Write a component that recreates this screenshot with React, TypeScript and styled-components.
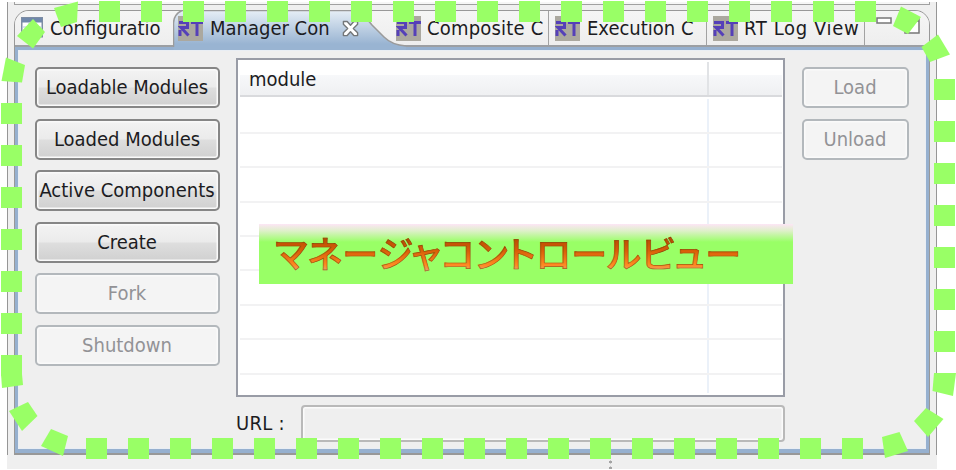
import React from "react";
import styled, { createGlobalStyle, css } from "styled-components";

const Global = createGlobalStyle`
  * { box-sizing: border-box; }
  body { margin: 0; background: #fff; }
`;

const ui = css`
  font-family: "DejaVu Sans Condensed", "DejaVu Sans", sans-serif;
  font-stretch: condensed;
  font-size: 20px;
  line-height: 24px;
  color: #1c1c22;
  white-space: nowrap;
`;

const Page = styled.div`
  ${ui}
  position: relative;
  width: 956px;
  height: 470px;
  overflow: hidden;
  background: #fff;
  padding: 2px 0 0 7px;
`;

const Shell = styled.div`
  width: 930px;
  height: 467px;
  background: #efefef;
`;

const Sides = styled.div`
  height: 453px;
  padding: 0 6px;
  border-left: 1px solid #969696;
  border-right: 1px solid #969696;
`;

const PaneAbove = styled.div`
  height: 3px;
  background: #f6f6f6;
  border: 1px solid #a0a0a0;
  border-top: 0;
`;

const View = styled.div`
  margin-top: 5px;
  height: 445px;
  border: 1px solid #989898;
  border-bottom-width: 2px;
  border-radius: 15px 15px 0 0;
  overflow: hidden;
`;

const TabBar = styled.div`
  display: flex;
  height: 36px;
  background: linear-gradient(#f5f5f5, #eeeeee);
  border-bottom: 2px solid #9c9fa3;
`;

const Tab = styled.div<{ $w: number; $pad: number; $edge?: boolean }>`
  position: relative;
  display: flex;
  align-items: flex-start;
  flex: none;
  width: ${(p) => p.$w}px;
  height: 36px;
  padding: 5px 0 0 ${(p) => p.$pad}px;
  ${(p) => p.$edge && css`
    height: 34px;
    border-right: 1px solid #a2a2a2;
  `}
`;

const TabShape = styled.svg`
  position: absolute;
  left: 0;
  top: -1px;
`;

const Label = styled.span<{ $ls?: number; $ml?: number }>`
  position: relative;
  margin-left: ${(p) => p.$ml ?? 6}px;
  letter-spacing: ${(p) => p.$ls ?? 0}px;
`;

const Icon = styled.svg<{ $ml?: number; $mt?: number }>`
  position: relative;
  flex: none;
  display: block;
  margin-left: ${(p) => p.$ml ?? 0}px;
  margin-top: ${(p) => p.$mt ?? 0}px;
`;

const Tools = styled.div`
  display: flex;
  padding: 6px 0 0 11px;
`;

const Body = styled.div`
  height: 406px;
  border: 3px solid #96b0cf;
  border-bottom-width: 4px;
  padding: 8px 0 0 17px;
  display: flex;
  box-shadow: inset 0 0 0 1px #e9eef4;
`;

const ButtonColumn = styled.div<{ $w: number; $ml?: number }>`
  display: flex;
  flex-direction: column;
  gap: 10.5px;
  flex: none;
  width: ${(p) => p.$w}px;
  margin: 9px 0 0 ${(p) => p.$ml ?? 0}px;
`;

const PushButton = styled.button`
  ${ui}
  display: flex;
  justify-content: center;
  width: 100%;
  height: 41px;
  padding: 6px 1px 0 0;
  border: 2px solid #868686;
  border-radius: 5px;
  background: linear-gradient(#f3f3f3 0, #ebebeb 48%, #dedede 52%, #d0d0d0 100%);
  box-shadow: inset 0 0 0 1.5px #fafafa;
  &:disabled {
    color: #929296;
    border-color: #b3b8bc;
    background: #f4f4f4;
  }
`;

const Center = styled.div`
  flex: none;
  width: 549px;
  margin-left: 16px;
`;

const Table = styled.div`
  height: 339px;
  background: #fff;
  border: 2px solid #999ca6;
  padding: 2px 1px 2px 2px;
`;

const Cols = styled.div`
  display: grid;
  grid-template-columns: 469px 1fr;
`;

const HeadRow = styled(Cols)`
  height: 35px;
  margin-bottom: 2.4px;
  border-bottom: 2px solid #d9dadd;
  background: linear-gradient(#fff 0 13px, #f7f8fa 13px, #eff0f2 100%);
`;

const HeadCell = styled.div<{ $line?: boolean }>`
  padding: 5px 0 0 9px;
  border-right: ${(p) => (p.$line ? "2px solid #e1e3e6" : "0")};
`;

const Row = styled(Cols)<{ $last?: boolean }>`
  height: ${(p) => (p.$last ? 18 : 34.4)}px;
  border-bottom: ${(p) => (p.$last ? "0" : "2px solid #f2f2f3")};
`;

const Cell = styled.div<{ $line?: boolean }>`
  border-right: ${(p) => (p.$line ? "2px solid #ebf1f9" : "0")};
`;

const UrlRow = styled.div`
  display: flex;
  margin-top: 8px;
`;

const UrlLabel = styled.label`
  width: 65px;
  padding-top: 6px;
  letter-spacing: 0.3px;
`;

const UrlField = styled.div`
  flex: 1;
  height: 37px;
  border: 2px solid #b9b9b9;
  border-radius: 4px;
  box-shadow: inset 0 0 0 1.5px #fbfbfb;
`;

const StatusGrip = styled.div`
  width: 3px;
  height: 10px;
  margin: 4px 0 0 602px;
  background: radial-gradient(circle, #a4a4a4 1.2px, transparent 1.8px) 0 0 / 3px 6px;
`;

const Banner = styled.div`
  position: absolute;
  left: 259px;
  top: 224px;
  width: 534px;
  height: 60px;
  background: linear-gradient(#fde6f6 0, #ddf0c8 7px, #99ff66 18px);
`;

const BannerText = styled.div`
  position: absolute;
  left: 16px;
  top: 1px;
  font: 500 36px/54px "Noto Sans CJK JP", sans-serif;
  font-feature-settings: "palt";
  letter-spacing: 0.35px;
  color: transparent;
  background: linear-gradient(#b84c02 14px, #d96008 26px, #ff8a22 40px, #e6a070 46px);
  background-clip: text;
  -webkit-background-clip: text;
  -webkit-text-stroke: 0.7px rgba(120, 60, 5, 0.65);
`;

const Marquee = styled.svg`
  position: absolute;
  left: 0;
  top: 0;
`;

const RtIcon = () => (
  <Icon width="25" height="25" viewBox="0 0 25 25">
    <rect width="25" height="25" fill="#aba89f" />
    <path
      d="M1 6.5H9.5V11.5H3L10.5 19.5M2 14V20M13 6.5H25M19 6.5V20"
      fill="none"
      stroke="#5540b8"
      strokeWidth="3"
    />
  </Icon>
);

const TableIcon = () => (
  <Icon $mt={1} width="22" height="22" viewBox="0 0 22 22">
    <rect x="0.75" y="0.75" width="20.5" height="19" fill="#fff" stroke="#7d8ca3" strokeWidth="1.5" />
    <rect x="1" y="1" width="20" height="4.500" fill="#7088ab" />
    <path d="M1 10H21M1 15H21M8 6V20M15 6V20" stroke="#b6c5dc" strokeWidth="1.2" />
  </Icon>
);

const CloseIcon = () => (
  <Icon $ml={12} $mt={4} width="17" height="17" viewBox="0 0 18 18">
    <path
      d="M1.5 1.5H5.5L9 5.5L12.5 1.5H16.5V4.5L12 9L16.5 13.5V16.5H12.5L9 12.5L5.5 16.5H1.5V13.5L6 9L1.5 4.5Z"
      fill="#fff"
      stroke="#747779"
      strokeWidth="1.5"
      strokeLinejoin="round"
    />
  </Icon>
);

const steps = (start: number, count: number) => Array.from({ length: count }, (_, i) => start + i * 42);

const corners = [
  "54,8 78,1.5 77,22 61,27",
  "33,19 45,32 33,48.5 17,36",
  "6,57.5 25,65 22,82.5 1.5,81",
  "1,374 22,374 23,385 2,388",
  "9,411 28,402 37.5,416 22,431",
  "51,429 68,436 63,456 41,446",
  "901,6.5 921,17 908,34 893,26",
  "938,34.5 950,54.5 930,62 921.5,47",
  "934,373 956,373 953,396 932.5,391",
  "926,408 943.5,419 928,437 914,421",
  "882,437 899.5,432 908,451 885,458",
];

const BorderDashes = () => (
  <Marquee width="956" height="470" fill="#99ff66">
    {steps(99, 19).map((x) => <rect key={x} x={x} y="1" width="21" height="21" />)}
    {steps(86, 19).map((x) => <rect key={x} x={x} y="438" width="21" height="21" />)}
    {steps(103, 7).map((y) => <rect key={y} x="1" y={y} width="21" height="21" />)}
    {steps(79, 7).map((y) => <rect key={y} x="934" y={y} width="21" height="21" />)}
    <rect x="1" y="355" width="21" height="20" />
    {corners.map((p) => <polygon key={p} points={p} />)}
  </Marquee>
);

export default function App() {
  return (
    <Page>
      <Global />
      <Shell>
        <Sides>
          <PaneAbove />
          <View>
            <TabBar>
              <Tab $w={158} $pad={6}>
                <TableIcon />
                <Label $ml={7}>Configuratio</Label>
              </Tab>
              <Tab $w={222} $pad={5}>
                <TabShape width="236" height="40" viewBox="0 0 236 40">
                  <defs>
                    <linearGradient id="activeTab" x1="0" y1="0" x2="0" y2="1">
                      <stop offset="0" stopColor="#e6eef6" />
                      <stop offset="0.85" stopColor="#99b4d2" />
                    </linearGradient>
                  </defs>
                  <path
                    d="M0.5 40V13Q1 4 9 0.5H180Q190 3 199 15L211 27Q219 35 233 36V40Z"
                    fill="url(#activeTab)"
                  />
                  <path
                    d="M0.5 37V13Q1 4 9 0.5H180Q190 3 199 15L211 27Q219 35 233 36"
                    fill="none"
                    stroke="#9b9b9b"
                    strokeWidth="1.5"
                  />
                </TabShape>
                <RtIcon />
                <Label $ml={7}>Manager Con</Label>
                <CloseIcon />
              </Tab>
              <Tab $w={154} $pad={1} $edge>
                <RtIcon />
                <Label $ls={0.2}>Composite C</Label>
              </Tab>
              <Tab $w={158} $pad={6} $edge>
                <RtIcon />
                <Label $ml={7}>Execution C</Label>
              </Tab>
              <Tab $w={158} $pad={6} $edge>
                <RtIcon />
                <Label $ls={0.65}>RT Log View</Label>
              </Tab>
              <Tools>
                <Icon width="16" height="7" viewBox="0 0 16 7">
                  <rect x="1" y="1" width="14" height="5" fill="#fff" stroke="#777" strokeWidth="1.5" />
                </Icon>
                <Icon $ml={12} width="16" height="17" viewBox="0 0 16 17">
                  <path d="M1 1H15V16H1ZM1 4H15" fill="#fff" stroke="#777" strokeWidth="1.5" />
                </Icon>
              </Tools>
            </TabBar>
            <Body>
              <ButtonColumn $w={185}>
                <PushButton>Loadable Modules</PushButton>
                <PushButton>Loaded Modules</PushButton>
                <PushButton>Active Components</PushButton>
                <PushButton>Create</PushButton>
                <PushButton disabled>Fork</PushButton>
                <PushButton disabled>Shutdown</PushButton>
              </ButtonColumn>
              <Center>
                <Table>
                  <HeadRow>
                    <HeadCell $line>module</HeadCell>
                    <HeadCell />
                  </HeadRow>
                  {steps(0, 8).map((k) => (
                    <Row key={k}>
                      <Cell $line />
                      <Cell />
                    </Row>
                  ))}
                  <Row $last>
                    <Cell $line />
                    <Cell />
                  </Row>
                </Table>
                <UrlRow>
                  <UrlLabel>URL :</UrlLabel>
                  <UrlField />
                </UrlRow>
              </Center>
              <ButtonColumn $w={107} $ml={17}>
                <PushButton disabled>Load</PushButton>
                <PushButton disabled>Unload</PushButton>
              </ButtonColumn>
            </Body>
          </View>
        </Sides>
        <StatusGrip />
      </Shell>
      <Banner>
        <BannerText>マネージャコントロールビュー</BannerText>
      </Banner>
      <BorderDashes />
    </Page>
  );
}
